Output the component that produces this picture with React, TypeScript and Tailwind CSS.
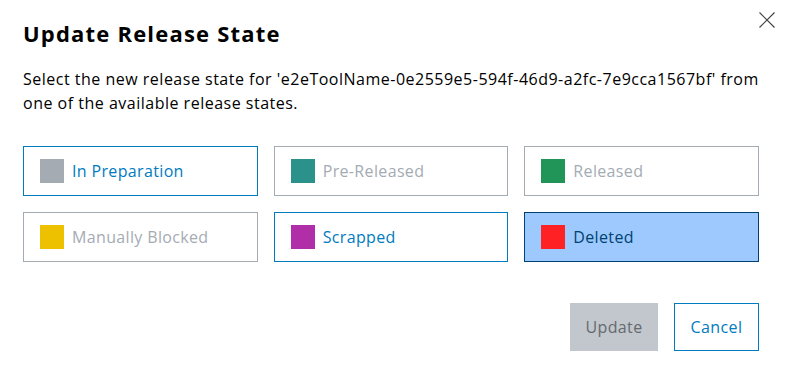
import React from "react";

const states = [
  { label: "In Preparation", color: "bg-[#a4abb3]", kind: "active" },
  { label: "Pre-Released", color: "bg-[#2a918b]", kind: "disabled" },
  { label: "Released", color: "bg-[#219557]", kind: "disabled" },
  { label: "Manually Blocked", color: "bg-[#eec100]", kind: "disabled" },
  { label: "Scrapped", color: "bg-[#b12ea9]", kind: "active" },
  { label: "Deleted", color: "bg-[#ff2124]", kind: "selected" },
];

export default function App() {
  return (
    <div className="w-[786px] h-[365px] bg-white relative font-['Open_Sans',sans-serif] text-black">
      <button className="absolute left-[759px] top-[12px] w-[16px] h-[16px] text-[#444]">
        <svg width="16" height="16" viewBox="0 0 16 16" fill="none" stroke="currentColor" strokeWidth="1.2">
          <path d="M0.5 0.5 L15.5 15.5 M15.5 0.5 L0.5 15.5" />
        </svg>
      </button>
      <div className="px-[23px] pt-[19px]">
        <h1 className="text-[22px] leading-[28px] font-bold tracking-[1.2px]">Update Release State</h1>
        <p className="mt-[20px] text-[16px] leading-[24px] text-[#000] tracking-[0.5px] w-[740px]">
          Select the new release state for 'e2eToolName-0e2559e5-594f-46d9-a2fc-7e9cca1567bf' from one of the available release states.
        </p>
        <div className="mt-[31px] grid grid-cols-3 gap-x-[16px] gap-y-[16px] w-[736px]">
          {states.map((s) => {
            const box =
              s.kind === "selected"
                ? "border-[#00426f] bg-[#9dc9ff] text-[#00426f]"
                : s.kind === "active"
                ? "border-[#007bc0] bg-white text-[#007bc0]"
                : "border-[#a4abb3] bg-white text-[#a4abb3]";
            return (
              <div key={s.label} className={`h-[50px] border flex items-center pl-[16px] gap-[8px] ${box}`}>
                <span className={`w-[24px] h-[24px] ${s.color}`} />
                <span className="text-[16px] tracking-[0.35px]">{s.label}</span>
              </div>
            );
          })}
        </div>
        <div className="mt-[41px] flex justify-end gap-[16px] w-[736px]">
          <button className="w-[88px] h-[48px] bg-[#c1c7cc] text-[#656a6f] text-[16px] tracking-[0.4px]">Update</button>
          <button className="w-[85px] h-[48px] border border-[#007bc0] text-[#007bc0] text-[16px] tracking-[0.4px]">Cancel</button>
        </div>
      </div>
    </div>
  );
}
